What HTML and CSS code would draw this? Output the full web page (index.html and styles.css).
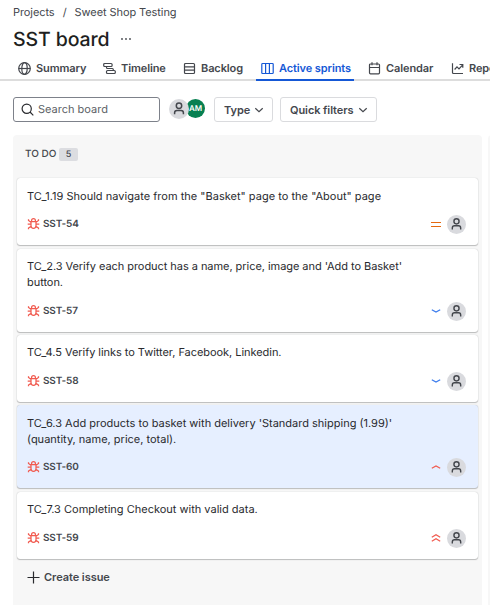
FILE: index.html
```html
<!DOCTYPE html>
<html lang="en">
<head>
<meta charset="utf-8">
<title>SST board</title>
<link rel="stylesheet" href="styles.css">
</head>
<body>
<svg class="defs" width="0" height="0">
  <symbol id="person" viewBox="0 0 20 20"><circle cx="10" cy="6.7" r="2.7"/><path d="M5.6 15.2v-1.5a2.3 2.3 0 0 1 2.3-2.3h4.2a2.3 2.3 0 0 1 2.3 2.3v1.5"/></symbol>
  <symbol id="bug" viewBox="0 0 13 12"><path d="M4 3.7h5v4.1a2.5 2.5 0 0 1-5 0zM4.6 3.5V2.6a1.9 1.9 0 0 1 3.8 0v.9M.7 6.2H4M9 6.2h3.300M1.500 1.300v1.200L4 4.200M11.500 1.300v1.200L9 4.200M1.500 11.200V10l2.600-1.600M11.500 11.200V10L8.900 8.400"/></symbol>
  <symbol id="down" viewBox="0 0 10 10"><path d="M1.300 3.300 5 6.700l3.700-3.400"/></symbol>
  <symbol id="low" viewBox="0 0 10 10"><path d="M.8 3.700 5 6.100l4.200-2.400"/></symbol>
  <symbol id="high" viewBox="0 0 10 10"><path d="M.8 6.300 5 3.900l4.200 2.400"/></symbol>
  <symbol id="highest" viewBox="0 0 10 10"><path d="M.8 4.300 5 1.700l4.200 2.600M.8 8.300 5 5.700l4.200 2.600"/></symbol>
  <symbol id="medium" viewBox="0 0 10 10"><path d="M0 3.500h10M0 7.500h10"/></symbol>
</svg>

<nav class="crumbs"><span>Projects</span><span class="slash">/</span><span>Sweet Shop Testing</span></nav>
<header class="heading"><h1>SST board</h1><svg class="dots" width="12" height="4" viewBox="0 0 12 4"><circle cx="2" cy="2" r=".9"/><circle cx="6" cy="2" r=".9"/><circle cx="10" cy="2" r=".9"/></svg></header>

<nav class="tabs">
  <a class="tab tab-summary"><svg class="icon" viewBox="0 0 13 13"><circle cx="6.500" cy="6.500" r="5.800"/><ellipse cx="6.500" cy="6.500" rx="2.700" ry="5.800"/><path d="M.7 6.500h11.600"/></svg><span>Summary</span></a>
  <a class="tab tab-timeline"><svg class="icon" viewBox="0 0 13 13"><rect x=".7" y="1.500" width="8.400" height="3" rx="1"/><rect x="3.500" y="8.500" width="8.800" height="3" rx="1"/><path d="M3.500 4.500v1q0 1 1 1h4.800q1 0 1 1v1"/></svg><span>Timeline</span></a>
  <a class="tab tab-backlog"><svg class="icon" viewBox="0 0 13 13"><rect x="1.500" y="1.500" width="10" height="10" rx="1"/><path d="M1.500 4.800h10M1.500 8.200h10"/></svg><span>Backlog</span></a>
  <a class="tab tab-sprints active"><svg class="icon" viewBox="0 0 13 13"><rect x=".8" y="1.500" width="11.400" height="10" rx=".8"/><path d="M4.600 1.500v10M8.400 1.500v10"/></svg><span>Active sprints</span></a>
  <a class="tab tab-calendar"><svg class="icon" viewBox="0 0 13 13"><rect x="1.500" y="2" width="10" height="9.800" rx="1"/><path d="M1.500 5.500h10M4 .3v3M9 .3v3"/></svg><span>Calendar</span></a>
  <a class="tab tab-reports"><svg class="icon" viewBox="0 0 13 13"><path d="M1.500 1.200v9.300q0 1 1 1h9.500M3.600 7.500 6 4.800l2 2 3.700-4M8.500 2.500h3.300v3.300"/></svg><span>Reports</span></a>
</nav>

<section class="toolbar">
  <div class="search"><svg class="icon" viewBox="0 0 13 13"><circle cx="5.700" cy="5.700" r="4.600"/><path d="m9 9 3.300 3.300"/></svg><span>Search board</span></div>
  <div class="people"><svg class="avatar"><use href="#person"/></svg><span class="member">AM</span></div>
  <button class="filter type"><span>Type</span><svg class="chevron"><use href="#down"/></svg></button>
  <button class="filter quick"><span>Quick filters</span><svg class="chevron"><use href="#down"/></svg></button>
</section>

<main class="board">
  <section class="column">
    <h2><span>TO DO</span><span class="count">5</span></h2>
    <article class="card"><p class="loose">TC_1.19 Should navigate from the "Basket" page to the "About" page</p><footer><svg class="bug"><use href="#bug"/></svg><b>SST-54</b><svg class="priority medium"><use href="#medium"/></svg><svg class="avatar"><use href="#person"/></svg></footer></article>
    <article class="card tall raised"><p class="tight">TC_2.3 Verify each product has a name, price, image and 'Add to Basket'<br>button.</p><footer><svg class="bug"><use href="#bug"/></svg><b>SST-57</b><svg class="priority low"><use href="#low"/></svg><svg class="avatar"><use href="#person"/></svg></footer></article>
    <article class="card snug raised"><p class="tight">TC_4.5 Verify links to Twitter, Facebook, Linkedin.</p><footer><svg class="bug"><use href="#bug"/></svg><b>SST-58</b><svg class="priority low"><use href="#low"/></svg><svg class="avatar"><use href="#person"/></svg></footer></article>
    <article class="card tall snug selected"><p>TC_6.3 Add products to basket with delivery 'Standard shipping (1.99)'<br>(quantity, name, price, total).</p><footer><svg class="bug"><use href="#bug"/></svg><b>SST-60</b><svg class="priority high"><use href="#high"/></svg><svg class="avatar"><use href="#person"/></svg></footer></article>
    <article class="card raised"><p>TC_7.3 Completing Checkout with valid data.</p><footer><svg class="bug"><use href="#bug"/></svg><b>SST-59</b><svg class="priority high"><use href="#highest"/></svg><svg class="avatar"><use href="#person"/></svg></footer></article>
    <button class="create"><svg class="plus" viewBox="0 0 13 13"><path d="M6.500 .5v12M.5 6.500h12"/></svg><span>Create issue</span></button>
  </section>
  <section class="column next"></section>
</main>
</body>
</html>
```
FILE: styles.css
```css
* { box-sizing: border-box; }
body { margin: 0; height: 605px; overflow: hidden; background: #fff; color: #44474d; font: 11px/16px Inter, sans-serif; text-rendering: geometricPrecision; }
svg { fill: none; stroke: currentColor; stroke-width: 1.2; flex: none; }
h1, h2, p { margin: 0; }
button { font: inherit; color: inherit; background: none; }
.defs { position: absolute; }
.crumbs { display: flex; height: 24px; padding: 4px 0 0 13px; letter-spacing: -.08px; }
.slash { width: 20px; text-align: center; }
.heading { display: flex; align-items: center; height: 30px; padding-left: 13px; gap: 10px; }
h1 { width: 97px; white-space: nowrap; font-size: 19.500px; letter-spacing: -.1px; line-height: 30px; font-weight: 550; color: #1e1f21; }
.dots { fill: #44474d; stroke: none; margin-bottom: 1px; }
.tabs { display: flex; height: 27px; padding-left: 13px; overflow: hidden; box-shadow: inset 0 -2px #ddd; font-weight: 600; letter-spacing: -.1px; }
.tab { display: flex; flex: none; align-items: center; padding: 1px 0 0 5px; gap: 5px; white-space: nowrap; }
.icon { width: 13px; height: 13px; }
.tab-summary { width: 85px; }
.tab-timeline { width: 80px; }
.tab-backlog { width: 78px; }
.tab-sprints { width: 98px; }
.tab-calendar { width: 83px; margin-left: 9px; }
.active { color: #1558d6; box-shadow: inset 0 -2px #1558d6; }
.toolbar { display: flex; height: 54px; padding: 16px 0 0 13px; align-items: flex-start; }
.search { display: flex; align-items: center; width: 147px; height: 25px; border: 1px solid #7d818a; border-radius: 3px; padding: 0 0 1px 7px; gap: 4px; }
.search .icon { color: #292a2e; }
.search span { color: #5c5f66; }
.people { display: flex; padding: 2px 0 0 9px; width: 54px; }
.avatar { width: 19px; height: 19px; border-radius: 50%; background: #d9dade; color: #44474d; stroke-width: 1.5; }
.card .avatar { padding: 0; }
.people .avatar { width: 20px; height: 20px; position: relative; }
.member { width: 19px; height: 19px; margin-left: -3px; border-radius: 50%; background: #078051; color: #fff; font-size: 8px; line-height: 19px; font-weight: 600; text-align: center; }
.filter { display: flex; align-items: center; height: 25px; padding: 1px 8px 0 9px; border: 1px solid #dadbde; border-radius: 3px; font-weight: 600; letter-spacing: -.08px; justify-content: space-between; }
.type { width: 59px; margin-right: 7px; }
.quick { width: 97px; }
.chevron { width: 10px; height: 10px; }
.board { display: flex; gap: 6px; padding-left: 13px; overflow: hidden; }
.column { width: 469px; height: 470px; flex: none; background: #f7f7f7; border-radius: 4px 4px 0 0; padding: 0 4px; }
h2 { height: 43px; display: flex; padding: 12px 0 0 8px; font-size: 10px; line-height: 14px; font-weight: 450; }
h2 span:first-child { width: 34px; }
.count { width: 19px; height: 13px; line-height: 13px; margin-top: 1px; background: #dcdde1; border-radius: 2px; text-align: center; font-size: 9px; font-weight: 550; }
.card { height: 67px; margin-bottom: 4px; padding: 10px 12px 0 10px; background: #fff; border-radius: 3px; box-shadow: 0 1px 1px #1e1f2140, 0 0 1px #1e1f214f; color: #292a2e; }
.card p { white-space: nowrap; font-weight: 420; }
.loose { letter-spacing: .02px; }
.tight { letter-spacing: -.05px; }
.raised { padding-top: 9px; }
.tall { height: 83px; }
.tall:not(.snug), .snug:not(.tall) { margin-bottom: 3px; }
.selected { background: #e6efff; }
.card footer { display: flex; align-items: center; height: 20px; margin-top: 10px; color: #44474d; }
.raised footer { margin-top: 11px; }
.card b { font-size: 10px; letter-spacing: -.15px; font-weight: 600; margin: 0 auto 0 3px; }
.bug { width: 13px; height: 12px; color: #f15b50; stroke-width: 1.25; }
.priority { width: 10px; height: 10px; margin-right: 6px; }
.medium { color: #e56910; }
.low { color: #3b7ced; }
.high { color: #f15b50; }
.create { display: flex; align-items: center; border: 0; padding: 6px 10px; font-weight: 600; letter-spacing: -.05px; gap: 4px; }
.plus { width: 13px; height: 13px; color: #292a2e; }
```
